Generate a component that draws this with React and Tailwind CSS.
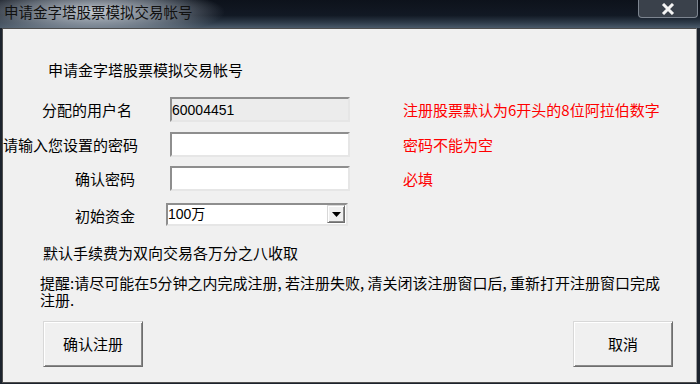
import React from "react";

const cjk = "font-['Noto_Sans_CJK_SC',sans-serif]";

const sunken =
  "border-2 border-t-[#8e8e8e] border-l-[#8e8e8e] border-b-[#e6e6e6] border-r-[#e6e6e6]";

const raised =
  "border border-t-[#d8d8d8] border-l-[#d8d8d8] border-b-[#6e6e6e] border-r-[#6e6e6e] shadow-[inset_1px_1px_0_#ffffff,inset_-1px_-1px_0_#8a8a8a]";

const FormRow = ({ label, labelPad = "", children, note }) => (
  <div className="flex items-center h-[25px]">
    <span className={`w-[132px] text-right whitespace-nowrap ${labelPad}`}>{label}</span>
    {children}
    {note && <span className="ml-[53px] text-[#ff0000] whitespace-nowrap">{note}</span>}
  </div>
);

export default function App() {
  return (
    <div
      className={`w-[700px] h-[384px] flex flex-col overflow-hidden bg-[#1c232d] ${cjk} text-[15px] leading-[16px] text-black`}
    >
      {/* title bar */}
      <div className="relative h-[28px] shrink-0 flex items-start bg-[radial-gradient(130px_26px_at_95px_12px,rgba(205,212,220,0.95),rgba(150,160,172,0.6)_60%,transparent_100%),linear-gradient(to_bottom,#0d121b_0%,#121924_55%,#2d3a48_80%,#4a5a6a_100%)]">
        <span className="pl-[4px] pt-[4px] text-[14.5px] leading-[16px] text-[#111]">
          申请金字塔股票模拟交易帐号
        </span>
        <div className="absolute right-[2px] top-0 w-[60px] h-[18px] border border-t-0 border-[#7d8590] rounded-b-[4px] bg-[#3a414b] flex items-center justify-center">
          <svg width="14" height="12" viewBox="0 0 14 12">
            <path d="M2 1 L12 11 M12 1 L2 11" stroke="#f4f4f4" strokeWidth="3" />
          </svg>
        </div>
      </div>

      {/* client area */}
      <div className="flex-1 ml-[2px] mr-[3px] mb-[1px] border border-[#4e4e4e] border-r-[#9a9a9a] bg-[#f0f0f0] flex flex-col">
        <p className="pt-[33px] pl-[45px]">申请金字塔股票模拟交易帐号</p>

        <div className="mt-[19px] flex flex-col">
          <FormRow label="分配的用户名" labelPad="pr-[3px]" note="注册股票默认为6开头的8位阿拉伯数字">
            <div
              className={`ml-[35px] w-[180px] h-[25px] ${sunken} bg-[#ececec] flex items-center font-['Liberation_Sans',sans-serif] text-[14px]`}
            >
              60004451
            </div>
          </FormRow>

          <div className="mt-[10px]">
            <FormRow label="请输入您设置的密码" note="密码不能为空">
              <div className={`ml-[35px] w-[180px] h-[25px] ${sunken} bg-white`} />
            </FormRow>
          </div>

          <div className="mt-[9px]">
            <FormRow label="确认密码" note="必填">
              <div className={`ml-[35px] w-[180px] h-[25px] ${sunken} bg-white`} />
            </FormRow>
          </div>

          <div className="mt-[11px] flex items-center h-[24px]">
            <span className="w-[132px] text-right pt-[4px]">初始资金</span>
            <div
              className={`ml-[31px] w-[182px] h-[23px] ${sunken} bg-white flex items-center justify-between`}
            >
              <span className="font-['Liberation_Sans','Noto_Sans_CJK_SC',sans-serif] text-[14px]">
                100万
              </span>
              <div className={`w-[18px] h-[18px] mr-[1px] bg-[#f0f0f0] ${raised} flex items-center justify-center`}>
                <svg width="9" height="5" viewBox="0 0 9 5">
                  <path d="M0 0 H9 L4.5 5 Z" fill="#000" />
                </svg>
              </div>
            </div>
          </div>
        </div>

        <p className="mt-[19px] pl-[40px]">默认手续费为双向交易各万分之八收取</p>

        <p className="mt-[13px] pl-[37px] whitespace-nowrap leading-[17px]">
          提醒:请尽可能在5分钟之内完成注册, 若注册失败, 清关闭该注册窗口后, 重新打开注册窗口完成
          <br />
          注册.
        </p>

        <div className="mt-[13px] flex justify-between pl-[40px] pr-[23px]">
          <button className={`w-[100px] h-[46px] bg-[#f0f0f0] ${raised}`}>确认注册</button>
          <button className={`w-[100px] h-[46px] bg-[#f0f0f0] ${raised}`}>取消</button>
        </div>
      </div>
    </div>
  );
}
